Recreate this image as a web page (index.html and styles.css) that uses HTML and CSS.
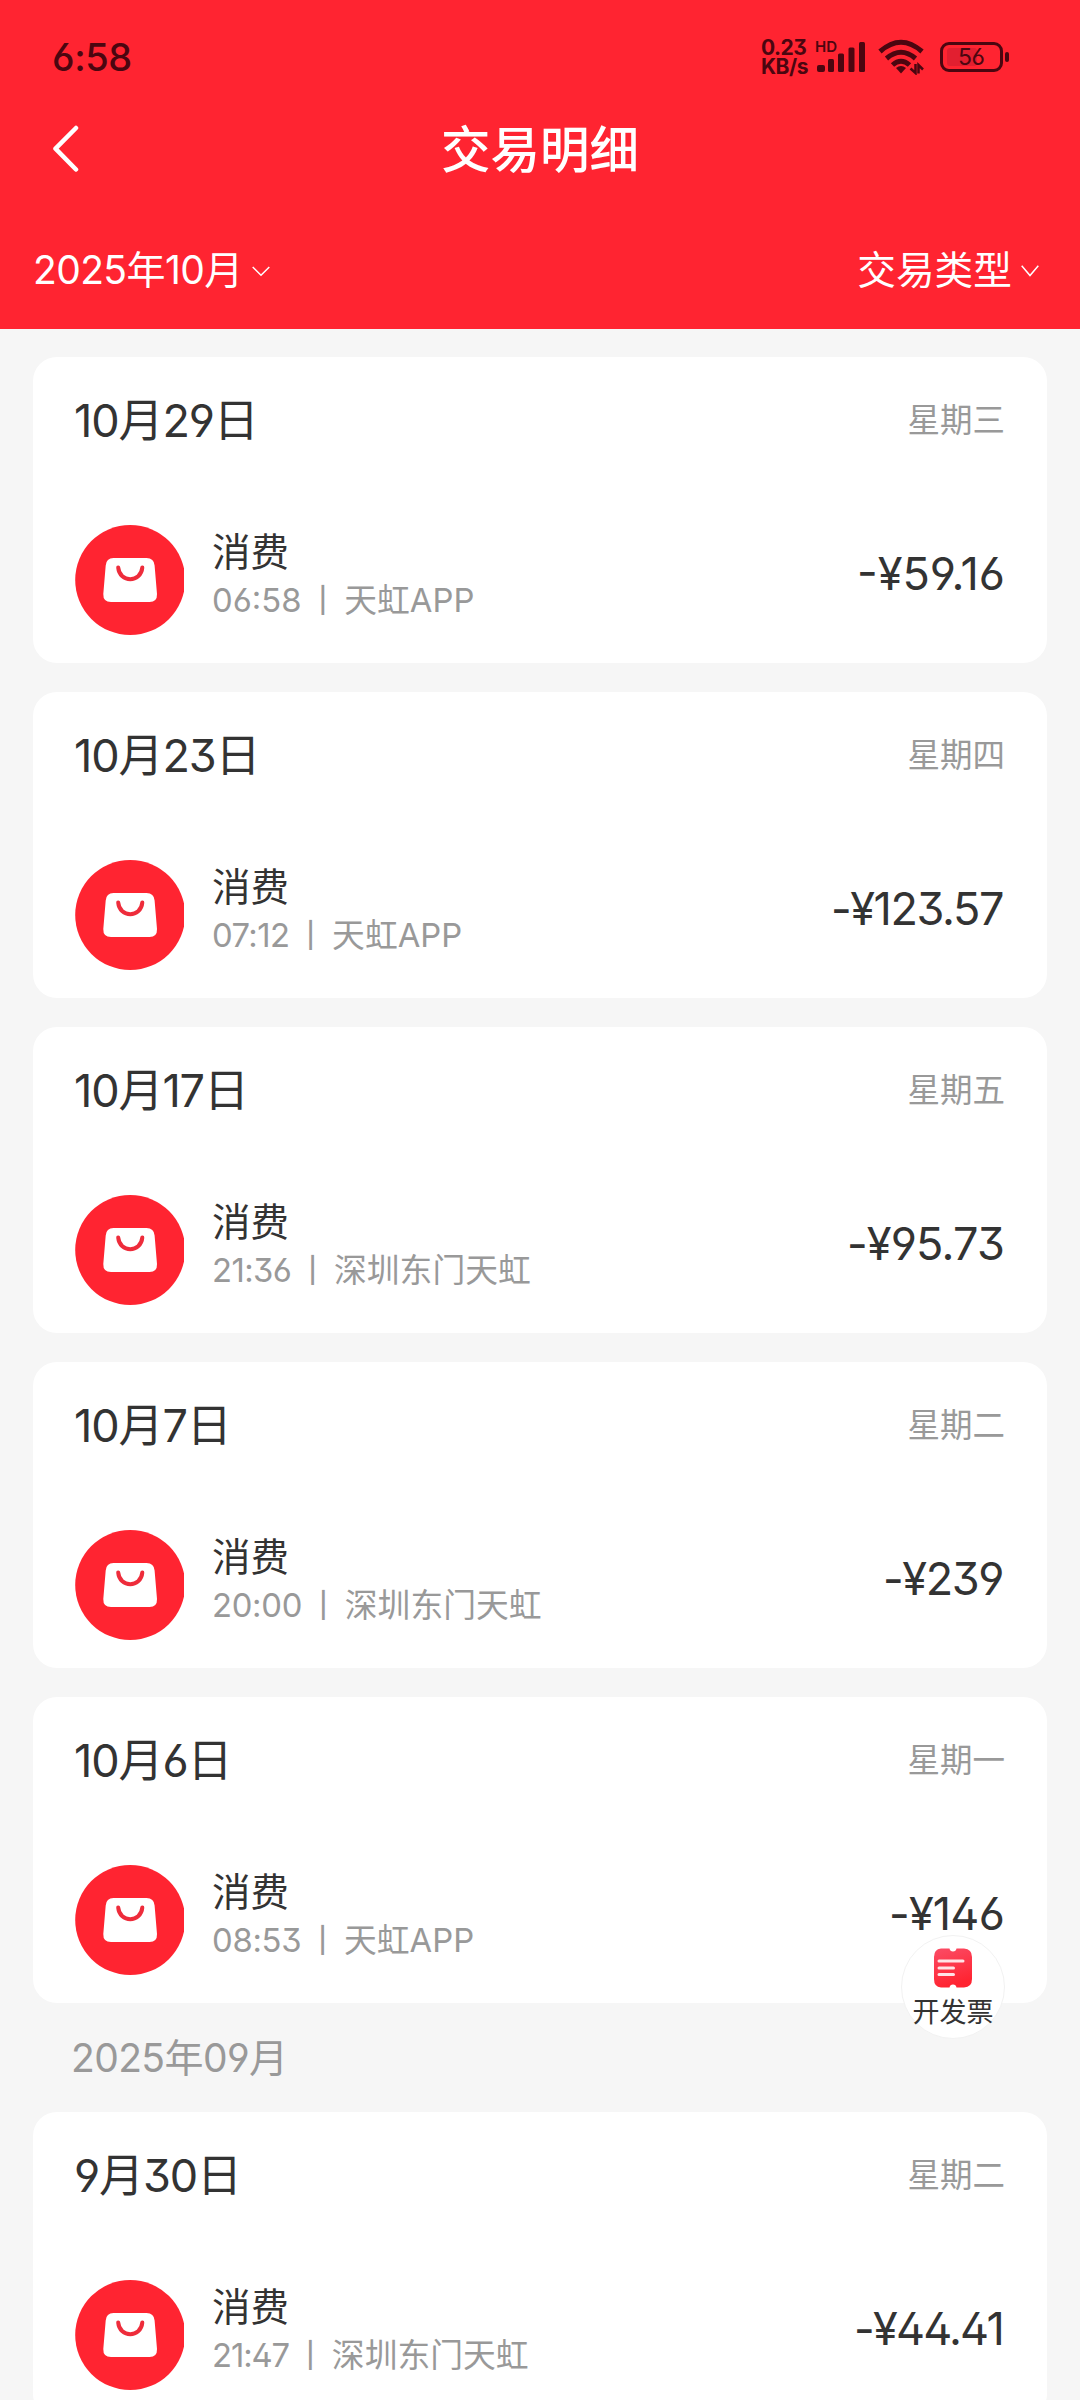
FILE: index.html
```html
<!DOCTYPE html>
<html lang="zh-CN">
<head>
<meta charset="utf-8">
<title>交易明细</title>
<link rel="stylesheet" href="styles.css">
</head>
<body>
<svg class="defs" width="0" height="0" aria-hidden="true">
  <symbol id="bag" viewBox="0 0 109 110">
    <circle cx="55.2" cy="55" r="55" fill="#ff2431"/>
    <path d="M38.500 33H71.500Q79 33 79.600 40.500L82 69Q82.300 77 74.500 77H36Q28 77 28.300 69L30.700 40.500Q31.300 33 38.500 33Z" fill="#fff"/>
    <path d="M43.200 42.500C44.500 58 66 58 67.300 42.500" fill="none" stroke="#ee2c3b" stroke-width="4" stroke-linecap="round"/>
  </symbol>
</svg>
<header class="header">
  <div class="status">
    <span class="clock">6:58</span>
    <div class="indicators">
      <div class="speed"><span>0.23</span><span>KB/s</span></div>
      <div class="signal">
        <span class="hd">HD</span>
        <svg width="48" height="32" viewBox="0 0 48 32" fill="#4b0610"><rect x="0" y="24" width="8" height="7" rx="2"/><rect x="11" y="18" width="6" height="13" rx="1.500"/><rect x="21" y="12.500" width="6" height="18.500" rx="1.500"/><rect x="31.500" y="6.500" width="6" height="24.500" rx="1.500"/><rect x="42" y="1" width="6" height="30" rx="1.500"/></svg>
      </div>
      <svg class="wifi" width="48" height="36" viewBox="0 0 48 36" fill="none" stroke="#4b0610" stroke-width="5"><path d="M2 12.500Q23 -6 44 12.500"/><path d="M8.500 19.500Q23 7 37.500 19.500"/><path d="M14.500 26Q23 18.500 31.500 26"/><path d="M18 29Q23 25 28 29L23 34.500Z" fill="#4b0610" stroke="none"/><path d="M37.500 25V34L32.500 29.500M40.500 34.500V26L45 30.500" stroke-width="2.500"/></svg>
      <div class="battery"><span class="level">56</span></div>
    </div>
  </div>
  <div class="titlebar">
    <svg class="back" width="28" height="48" viewBox="0 0 28 48" fill="none" stroke="#fff" stroke-width="4.500" stroke-linecap="round" stroke-linejoin="round"><path d="M24 3L3.500 23.700L24 44.500"/></svg>
    <h1 class="title">交易明细</h1>
  </div>
  <div class="filters">
    <div class="filter"><span>2025年10月</span><svg width="18" height="11" viewBox="0 0 18 11" fill="none" stroke="#fff" stroke-width="1.500"><path d="M.7 1L9 9.300L17.300 1"/></svg></div>
    <div class="filter type"><span>交易类型</span><svg width="18" height="12" viewBox="0 0 18 12" fill="none" stroke="#fff" stroke-width="1.500"><path d="M.7 .7L9 10.500L17.300 .7"/></svg></div>
  </div>
</header>
<main class="list">
  <section class="card">
    <div class="day"><span class="date">10月29日</span><span class="week">星期三</span></div>
    <div class="item"><svg class="icon"><use href="#bag"/></svg><div class="info"><span class="name">消费</span><span class="meta"><span>06:58</span><span class="bar">丨</span><span>天虹APP</span></span></div><span class="amount">-¥59.16</span></div>
  </section>
  <section class="card">
    <div class="day"><span class="date">10月23日</span><span class="week">星期四</span></div>
    <div class="item"><svg class="icon"><use href="#bag"/></svg><div class="info"><span class="name">消费</span><span class="meta"><span class="snug">07:12</span><span class="bar">丨</span><span>天虹APP</span></span></div><span class="amount tight">-¥123.57</span></div>
  </section>
  <section class="card">
    <div class="day"><span class="date">10月17日</span><span class="week">星期五</span></div>
    <div class="item"><svg class="icon"><use href="#bag"/></svg><div class="info"><span class="name">消费</span><span class="meta"><span class="snug">21:36</span><span class="bar">丨</span><span>深圳东门天虹</span></span></div><span class="amount snug">-¥95.73</span></div>
  </section>
  <section class="card">
    <div class="day"><span class="date">10月7日</span><span class="week">星期二</span></div>
    <div class="item"><svg class="icon"><use href="#bag"/></svg><div class="info"><span class="name">消费</span><span class="meta"><span class="close">20:00</span><span class="bar">丨</span><span>深圳东门天虹</span></span></div><span class="amount tight">-¥239</span></div>
  </section>
  <section class="card">
    <div class="day"><span class="date">10月6日</span><span class="week">星期一</span></div>
    <div class="item"><svg class="icon"><use href="#bag"/></svg><div class="info"><span class="name">消费</span><span class="meta"><span class="close">08:53</span><span class="bar">丨</span><span>天虹APP</span></span></div><span class="amount snug">-¥146</span></div>
  </section>
  <h2 class="divider">2025年09月</h2>
  <section class="card">
    <div class="day"><span class="date">9月30日</span><span class="week">星期二</span></div>
    <div class="item"><svg class="icon"><use href="#bag"/></svg><div class="info"><span class="name">消费</span><span class="meta"><span class="tight">21:47</span><span class="bar">丨</span><span>深圳东门天虹</span></span></div><span class="amount tighter">-¥44.41</span></div>
  </section>
</main>
<button class="invoice">
  <svg width="40" height="40" viewBox="0 0 40 40"><defs><linearGradient id="g" x1="0" y1="0" x2=".3" y2="1"><stop offset="0" stop-color="#fb4c66"/><stop offset="1" stop-color="#ff2431"/></linearGradient></defs><path d="M8 .5H16.500Q17 3.500 20 3.500T23.500 .5H31Q39 1 39 9V31Q39 39 31 39.500H23.500Q23 36.500 20 36.500T16.500 39.500H8Q1 39 1 31V9Q1 1 8 .5Z" fill="url(#g)"/><path d="M6 13H30M6 20H20.500M6 26.500H20.500" stroke="#ffe3e6" stroke-width="3" stroke-linecap="round"/></svg>
  <span>开发票</span>
</button>
</body>
</html>
```
FILE: styles.css
```css
* { box-sizing: border-box; }
body {
  margin: 0;
  height: 2400px;
  overflow: hidden;
  background: #f6f6f6;
  color: #333;
  font-family: Inter, "Noto Sans CJK SC", sans-serif;
  font-feature-settings: "cv03", "cv04", "ss01";
}
.defs { position: absolute; }
svg { display: block; flex: none; }
.header { height: 329px; background: #ff2431; color: #fff; }
.status { height: 114px; padding: 0 77px 0 52px; display: flex; justify-content: space-between; align-items: center; color: #4b0610; }
.clock { font-size: 38px; font-weight: 450; letter-spacing: -.4px; line-height: 40px; }
.indicators { display: flex; align-items: center; }
.speed { width: 54px; display: flex; flex-direction: column; font-size: 21px; font-weight: 700; letter-spacing: -.5px; line-height: 19px; padding-bottom: 1px; }
.signal { display: grid; width: 52px; height: 36px; }
.signal > * { grid-area: 1 / 1; }
.signal svg { margin: 2px 0 0 2px; }
.hd { font-size: 15px; font-weight: 600; line-height: 15px; }
.wifi { margin-left: 11px; }
.battery { display: flex; align-items: center; margin-left: 14px; width: 63px; height: 30px; border: 3px solid #4b0610; border-radius: 9px; position: relative; }
.battery::after { content: ""; position: absolute; right: -9px; top: 7px; width: 4px; height: 10px; border-radius: 2px; background: #4b0610; }
.level { margin-left: 4px; width: 30px; padding-left: 11px; height: 18px; border-radius: 3px; background: #e21f30; font-size: 23px; letter-spacing: -.5px; line-height: 18px; }
.titlebar { display: flex; align-items: center; height: 70px; padding-left: 52px; }
.title { margin: 2px 0 0 361px; font-size: 49.5px; font-weight: 450; line-height: 70px; }
.filters { display: flex; justify-content: space-between; height: 145px; padding: 0 41px 0 33px; }
.filter { display: flex; align-items: center; height: 174px; gap: 9px; font-size: 39px; letter-spacing: -.6px; }
.filter span { margin-top: -8px; }
.type { font-size: 38.7px; letter-spacing: 0; }
.list { display: flex; flex-direction: column; gap: 29px; padding: 28px 33px 0; }
.card { flex: none; height: 306px; border-radius: 24px; background: #fff; padding: 26px 41px 0 42px; }
.day { display: flex; justify-content: space-between; align-items: center; height: 68px; }
.date { margin-left: -1px; font-size: 45px; letter-spacing: -1.1px; }
.week { padding: 1px 1px 0 0; font-size: 32.5px; color: #999; }
.item { display: flex; align-items: center; margin-top: 73px; height: 112px; }
.icon { width: 109px; height: 110px; }
.info { display: flex; flex-direction: column; margin: -11px 0 0 28px; }
.name { font-size: 38.5px; line-height: 50px; }
.meta { display: flex; font-size: 32.8px; line-height: 46px; color: #999; }
.meta .close { letter-spacing: -.3px; }
.meta .snug { letter-spacing: -.6px; }
.meta .tight { letter-spacing: -1.1px; }
.bar { margin: 0 5px; }
.amount { margin: -12px 1px 0 auto; font-size: 45px; line-height: 50px; }
.amount.snug { margin-right: 2px; letter-spacing: -.8px; }
.amount.tight { margin-right: 3px; letter-spacing: -1.4px; }
.amount.tighter { margin-right: 3px; letter-spacing: -1.8px; }
.divider { margin: -29px 0; padding-left: 38px; height: 109px; line-height: 110px; font-size: 39px; letter-spacing: -.6px; font-weight: 400; color: #999; }
.invoice { position: absolute; left: 901px; top: 1935px; width: 104px; height: 104px; padding: 12px 0 0; border: 1px solid #f2f2f2; border-radius: 50%; background: #fff; display: flex; flex-direction: column; align-items: center; color: #333; font: 27px/40px Inter, "Noto Sans CJK SC", sans-serif; }
.invoice span { margin-top: 5px; white-space: nowrap; }
```
